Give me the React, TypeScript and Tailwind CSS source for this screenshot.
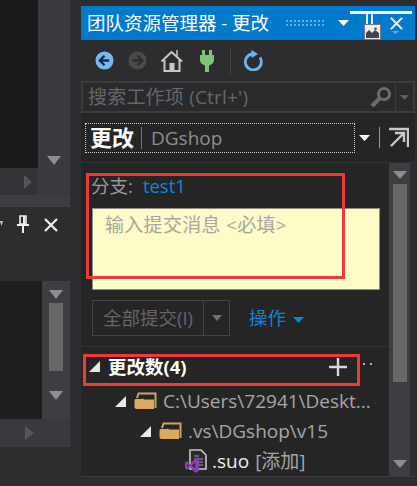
import React from "react";

const Tri = ({ c = "text-[#e8e8e8]" }: { c?: string }) => (
  <svg width="11" height="11" viewBox="0 0 11 11" className={c}>
    <path d="M11 0V11H0Z" fill="currentColor" />
  </svg>
);

const Down = ({ w = 12, h = 7, c = "#fff" }: { w?: number; h?: number; c?: string }) => (
  <svg width={w} height={h} viewBox="0 0 12 7" preserveAspectRatio="none"><path d="M0 0H12L6 7Z" fill={c} /></svg>
);

const Folder = () => (
  <svg width="23" height="18" viewBox="0 0 23 18" fill="none">
    <path d="M3 6L4.5 1.5H21.5V16" stroke="#cda463" strokeWidth="2" />
    <path d="M0.5 8.5C0.5 7.5 1 7 2 7H8L10 5.5H20V17H3C1.5 17 0.5 16 0.5 15Z" fill="#dba95f" />
    <path d="M5 3H20V7.5H10L8 5.5H5Z" fill="#252526" />
  </svg>
);

const CloseX = ({ size = 16 }: { size?: number }) => (
  <svg width={size} height={size} viewBox="0 0 16 16"><path d="M2 2L14 14M14 2L2 14" stroke="#f0f0f0" strokeWidth="2.2" /></svg>
);

const Pin = () => (
  <svg width="12" height="18" viewBox="0 0 12 18" fill="none">
    <path d="M3 1H9V9H3Z" stroke="#eee" strokeWidth="1.6" />
    <path d="M0 10H12M6 10V18" stroke="#eee" strokeWidth="2" />
    <path d="M7 1V9" stroke="#eee" strokeWidth="2" />
  </svg>
);

function LeftColumn() {
  return (
    <div className="flex w-[70px] shrink-0 flex-col">
      <div className="flex h-[168px]">
        <div className="w-[38px] bg-[#1b1b1c]" />
        <div className="flex w-[32px] flex-col items-center justify-end bg-[#3a3a3e] pb-[3px]">
          <Down w={14} h={9} c="#8e8e90" />
        </div>
      </div>
      <div className="flex h-[27px]">
        <div className="flex w-[38px] items-center justify-end bg-[#333337] pr-[6px]">
          <svg width="8" height="14" viewBox="0 0 8 14"><path d="M0 0L8 7L0 14Z" fill="#55555a" /></svg>
        </div>
        <div className="w-[32px] bg-[#3a3a3e]" />
      </div>
      <div className="h-[12px] bg-[#3e3e42]" />
      <div className="flex h-[74px] items-start bg-[#2d2d30] pl-0 pt-[8px]">
        <div className="mt-[6px]"><Down w={3} h={5} c="#d0d0d0" /></div>
        <div className="ml-[14px]"><Pin /></div>
        <div className="ml-[14px] mt-[2px]"><CloseX /></div>
      </div>
      <div className="flex h-[138px]">
        <div className="w-[42px] bg-[#1e1e1e]" />
        <div className="flex w-[28px] flex-col items-center bg-[#3e3e42] pt-[9px]">
          <Down w={14} h={9} c="#8e8e90" />
          <div className="mt-[4px] h-[68px] w-[14px] bg-[#686868]" />
          <div className="mt-auto mb-[19px]"><Down w={14} h={9} c="#8e8e90" /></div>
        </div>
      </div>
      <div className="flex h-[28px] items-center bg-[#3a3a3e] pl-[25px]">
        <svg width="9" height="14" viewBox="0 0 9 14"><path d="M0 0L9 7L0 14Z" fill="#55555a" /></svg>
      </div>
    </div>
  );
}

function TitleBar() {
  return (
    <div className="flex h-[34px] items-center bg-[#007acc] pl-[6px] text-[18.5px] text-white">
      <span className="w-[198px] whitespace-nowrap">团队资源管理器 - 更改</span>
      <div className="h-[9px] w-[40px] bg-[radial-gradient(#5fb0e8_1px,transparent_1px)] bg-[length:4px_4px]" />
      <div className="ml-[13px]"><Down w={11} h={6} /></div>
    </div>
  );
}

function Toolbar() {
  return (
    <div className="flex h-[41px] items-center bg-[#2d2d30] pl-[14px]">
      <svg width="19" height="19" viewBox="0 0 20 20"><circle cx="10" cy="10" r="9.5" fill="#75b9f2" /><path d="M10 5L5 10L10 15M5 10H15" stroke="#1f2a38" strokeWidth="2.4" fill="none" /></svg>
      <svg className="ml-[14px]" width="19" height="19" viewBox="0 0 20 20"><circle cx="10" cy="10" r="9.5" fill="#4a4a4c" /><path d="M10 5L15 10L10 15M15 10H5" stroke="#2d2d30" strokeWidth="2.4" fill="none" /></svg>
      <svg className="ml-[13px]" width="24" height="24" viewBox="0 0 24 24" fill="none"><path d="M1.5 12.5L11.5 3L22 12.5" stroke="#c8c8c8" strokeWidth="2" /><path d="M4.5 11V22H19.5V11" stroke="#c8c8c8" strokeWidth="2" /><rect x="9.5" y="14" width="5" height="8" fill="#c8c8c8" /><path d="M17 1V7" stroke="#c8c8c8" strokeWidth="1.5" /></svg>
      <svg className="ml-[15px]" width="16" height="24" viewBox="0 0 16 24"><path d="M1 6H15V11C15 14 12 16 10 16.5V23H6V16.5C4 16 1 14 1 11Z" fill="#7cc576" /><rect x="3" y="1" width="3" height="6" fill="#7cc576" /><rect x="10" y="1" width="3" height="6" fill="#7cc576" /></svg>
      <div className="ml-[15px] h-[27px] w-px bg-[#444446]" />
      <svg className="ml-[12px]" width="20" height="21" viewBox="0 0 20 21" fill="none"><path d="M17 7.5A8 8 0 1 1 9 4" stroke="#6db4f0" strokeWidth="2.8" /><path d="M8.5 0L15 4L8.5 8Z" fill="#6db4f0" /></svg>
    </div>
  );
}

function Search() {
  return (
    <div className="flex h-[32px] items-center border-2 border-[#3c3c3f] bg-[#2a2a2c] text-[19px] text-[#66666a]">
      <span className="ml-[5px] flex-1 whitespace-nowrap tracking-[0.2px]">搜索工作项 (Ctrl+')</span>
      <svg width="22" height="24" viewBox="0 0 22 24" fill="none"><circle cx="14" cy="9" r="5.5" stroke="#6c6c6c" strokeWidth="3" /><path d="M10 13L2 21" stroke="#6c6c6c" strokeWidth="4" /></svg>
      <div className="ml-[3px] flex h-full w-[18px] items-center justify-center border-l border-[#3c3c3f]"><Down w={9} h={5} c="#5e5e60" /></div>
    </div>
  );
}

function Header() {
  return (
    <div className="flex h-[50px] items-center border-b border-[#333335] bg-[#252526] pl-[4px]">
      <div className="flex h-[30px] w-[270px] items-center border border-dotted border-[#cfcfcf]">
        <span className="ml-[4px] text-[22px] font-bold text-white">更改</span>
        <span className="ml-[7px] mr-[9px] h-[22px] w-px bg-[#77777a]" />
        <span className="mt-[2px] text-[19px] text-[#8d8d90]">DGshop</span>
      </div>
      <div className="ml-[4px]"><Down w={11} h={6} /></div>
      <div className="ml-[9px] h-[21px] w-px bg-[#9a9a9a]" />
      <svg className="ml-[8px]" width="21" height="21" viewBox="0 0 21 21" fill="none"><path d="M1 2H20V20" stroke="#c8c8c8" strokeWidth="2.4" /><path d="M3 19L15 7M7 6H16V15" stroke="#c8c8c8" strokeWidth="2.4" /></svg>
    </div>
  );
}

function Row({ pad, icon, children }: { pad: number; icon: React.ReactNode; children: React.ReactNode }) {
  return (
    <div className="flex h-[30px] items-center whitespace-nowrap text-[19px] text-[#a5a5a8]" style={{ paddingLeft: pad }}>
      {icon}
      {children}
    </div>
  );
}

function Body() {
  return (
    <div className="flex h-[313px]">
      <div className="flex w-[308px] flex-col bg-[#252526]">
        <div className="flex h-[45px] items-center pl-[10px] text-[18.5px] text-[#9a9a9d]">
          分支:<span className="ml-[10px] text-[#0e86d8]">test1</span>
        </div>
        <div className="ml-[11px] h-[82px] w-[288px] border border-[#8e8e80] bg-[#fdfbc8] pl-[12px] pt-[2px] text-[19px] tracking-[0.3px] text-[#a7a7a0]">
          输入提交消息 &lt;必填&gt;
        </div>
        <div className="ml-[11px] mt-[10px] flex h-[36px] items-center">
          <div className="flex h-full w-[112px] items-center justify-center border border-[#444446] text-[18.5px] text-[#66666a]">全部提交(I)</div>
          <div className="flex h-full w-[26px] items-center justify-center border border-l-0 border-[#444446]"><Down w={10} h={6} c="#6f6f72" /></div>
          <span className="ml-[19px] text-[18.5px] text-[#0e86d8]">操作</span>
          <div className="ml-[7px] mt-[3px]"><Down w={11} h={6} c="#0e86d8" /></div>
        </div>
        <div className="mt-[10px] h-px bg-[#333335]" />
        <div className="flex h-[39px] items-center pl-[8px]">
          <Tri />
          <span className="w-[228px] pl-[8px] text-[18.5px] font-bold text-white">更改数(4)</span>
          <svg width="20" height="20" viewBox="0 0 20 20"><path d="M10 1V19M1 10H19" stroke="#d8d8d8" strokeWidth="2.4" /></svg>
          <div className="ml-[15px] mb-[6px] flex gap-[5px]">
            <div className="h-[2px] w-[2px] bg-[#b5b5b5]" />
            <div className="h-[2px] w-[2px] bg-[#b5b5b5]" />
          </div>
        </div>
        <Row pad={34} icon={<Tri />}>
          <span className="ml-[8px]"><Folder /></span>
          <span className="ml-[6px]">C:\Users\72941\Deskt...</span>
        </Row>
        <Row pad={59} icon={<Tri />}>
          <span className="ml-[8px]"><Folder /></span>
          <span className="ml-[6px]">.vs\DGshop\v15</span>
        </Row>
        <Row pad={103} icon={
          <svg width="24" height="25" viewBox="0 0 24 25" fill="none">
            <path d="M6 1H17L22 6V20H6Z" stroke="#c8c8c8" strokeWidth="1.6" fill="#2a2a2c" />
            <path d="M10 7H15M10 10H19M10 13H19M10 16H19" stroke="#9a9a9a" strokeWidth="1.2" />
            <path d="M15 8V22L11 24L6 18L3 21L1 19.5V13.5L3 12L6 15L11 10Z" fill="#8a3fb5" />
            <path d="M3.5 14.5V18L5 16.5ZM11 13.5L8 16.5L11 19.5Z" fill="#2a2a2c" />
          </svg>
        }>
          <span className="ml-[4px] text-[#ededed]">.suo</span>
          <span className="ml-[6px]">[添加]</span>
        </Row>
      </div>
      <div className="flex w-[21px] flex-col items-center bg-[#3e3e42] pt-[8px]">
        <Down w={14} h={8} c="#8e8e90" />
        <div className="mt-[5px] h-[198px] w-[14px] bg-[#686868]" />
        <div className="mt-auto mb-[8px]"><Down w={14} h={8} c="#8e8e90" /></div>
      </div>
      <div className="w-[5px] bg-[#2d2d30]" />
    </div>
  );
}

export default function App() {
  return (
    <div
      className="relative flex h-[486px] w-[417px] overflow-hidden bg-[#2d2d30]"
      style={{ fontFamily: '"Open Sans", "Noto Sans CJK SC", "Liberation Sans", sans-serif' }}
    >
      <LeftColumn />
      <div className="ml-[11px] mr-[2px] mt-[6px] flex h-[471px] w-[334px] flex-col border-b border-[#3e3e42]">
        <TitleBar />
        <Toolbar />
        <Search />
        <Header />
        <Body />
      </div>
      {/* annotation boxes and the floating window controls lying over the panel */}
      <div className="absolute left-[86px] top-[173px] h-[106px] w-[259px] border-[3px] border-[#f03a3a]" />
      <div className="absolute left-[83px] top-[354px] h-[32px] w-[277px] border-[3px] border-[#f03a3a]" />
      <div className="absolute left-[350px] top-[11px] h-[3px] w-[62px] bg-[#f4f4f4]" />
      <div className="absolute left-[366px] top-[14px] h-[10px] w-[7px] border-x-2 border-[#e8e8e8]" />
      <div className="absolute left-[364px] top-[24px] flex h-[16px] w-[17px] items-center justify-center border border-[#777] bg-[#eeeeee]">
        <svg width="13" height="11" viewBox="0 0 13 11"><path d="M0 11V6L3 3L6 6L9 3L13 6V11Z" fill="#3f4650" /><circle cx="9.5" cy="1.8" r="1.3" fill="#3f4650" /></svg>
      </div>
      <div className="absolute left-[389px] top-[16px]"><CloseX size={15} /></div>
      <div className="absolute left-[392px] top-[31px]"><Down w={7} h={3} c="#7fa9c9" /></div>
    </div>
  );
}
